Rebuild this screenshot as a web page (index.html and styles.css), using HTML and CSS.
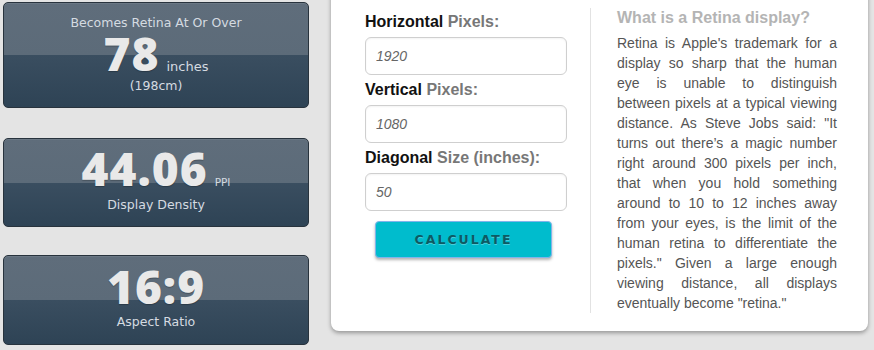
FILE: index.html
```html
<!DOCTYPE html>
<html lang="en">
<head>
    <meta charset="UTF-8">
    <meta name="viewport" content="width=device-width, initial-scale=1.0">
    <title>Retina Display Calculator</title>
    <link rel="stylesheet" href="styles.css">
</head>
<body>
    <div class="page">
        <div class="results">
            <div class="card card-big">
                <p class="card-label">Becomes Retina At Or Over</p>
                <p class="card-value">78<span class="unit">inches</span></p>
                <p class="card-label">(198cm)</p>
            </div>
            <div class="card">
                <p class="card-value">44.06<span class="unit unit-small">PPI</span></p>
                <p class="card-label">Display Density</p>
            </div>
            <div class="card card-last">
                <p class="card-value">16:9</p>
                <p class="card-label">Aspect Ratio</p>
            </div>
        </div>

        <div class="panel">
            <form class="calc" onsubmit="return false;">
                <label for="horizontal"><b>Horizontal</b> Pixels:</label>
                <input type="text" id="horizontal" placeholder="1920">
                <label for="vertical"><b>Vertical</b> Pixels:</label>
                <input type="text" id="vertical" placeholder="1080">
                <label for="diagonal"><b>Diagonal</b> Size (inches):</label>
                <input type="text" id="diagonal" placeholder="50">
                <button type="submit" class="btn-calc">CALCULATE</button>
            </form>

            <div class="info">
                <h3>What is a Retina display?</h3>
                <p>Retina is Apple's trademark for a display so sharp that the human eye is unable to distinguish between pixels at a typical viewing distance. As Steve Jobs said: "It turns out there’s a magic number right around 300 pixels per inch, that when you hold something around to 10 to 12 inches away from your eyes, is the limit of the human retina to differentiate the pixels." Given a large enough viewing distance, all displays eventually become "retina."</p>
            </div>
        </div>
    </div>
</body>
</html>
```

FILE: styles.css
```css
* {
    margin: 0;
    padding: 0;
    box-sizing: border-box;
}
body {
    background-color: #e4e4e4;
    font-family: 'Liberation Sans', Arial, sans-serif;
    overflow: hidden;
}
.page {
    display: flex;
    align-items: flex-start;
    gap: 22px;
    padding: 2px 0 0 3px;
}
.results {
    width: 306px;
    display: flex;
    flex-direction: column;
}
.card {
    height: 89px;
    margin-top: 30px;
    border: 1px solid #28333d;
    border-radius: 5px;
    background: linear-gradient(180deg, #5f6d7b 0%, #5c6b79 50%, #3a4e60 50%, #2e4355 100%);
    box-shadow: inset 0 1px 0 rgba(255, 255, 255, 0.08);
    display: flex;
    flex-direction: column;
    justify-content: center;
    align-items: center;
    gap: 7px;
    padding-bottom: 4px;
    color: #d5dbe1;
    font-family: 'DejaVu Sans', Verdana, sans-serif;
}
.card-big {
    height: 106px;
    margin-top: 0;
    gap: 0;
    padding-bottom: 2px;
}
.card-big .card-value {
    margin: 2px 0 4px;
}
.card-last {
    height: 90px;
    margin-top: 28px;
}
.card-label {
    font-size: 12.5px;
    line-height: 17px;
}
.card-value {
    font-family: 'Open Sans', sans-serif;
    font-weight: 800;
    font-size: 46px;
    line-height: 40px;
    color: #e9e9e9;
    letter-spacing: 1px;
    text-shadow: 0 1px 1px rgba(0, 0, 0, 0.25);
}
.unit {
    font-family: 'DejaVu Sans', Verdana, sans-serif;
    font-weight: normal;
    font-size: 13px;
    line-height: 13px;
    letter-spacing: 0;
    color: #d5dbe1;
    margin-left: 7px;
    text-shadow: none;
}
.unit-small {
    font-size: 10.5px;
    margin-left: 7px;
}
.panel {
    width: 537px;
    margin-top: -14px;
    background: #ffffff;
    border-radius: 8px;
    box-shadow: 0 2px 4px rgba(0, 0, 0, 0.35);
    display: flex;
    padding: 20px 31px 18px 34px;
}
.calc {
    width: 226px;
    padding: 4px 23px 0 0;
    border-right: 1px solid #e2e2e2;
    display: flex;
    flex-direction: column;
    align-items: flex-start;
}
.calc label {
    font-size: 16px;
    font-weight: bold;
    line-height: 20px;
    color: #777777;
    margin-bottom: 5px;
}
.calc label b {
    color: #111111;
}
.calc input {
    width: 202px;
    height: 38px;
    margin-bottom: 5px;
    border: 1px solid #cfcfcf;
    border-radius: 6px;
    padding: 0 10px;
    font-family: 'Liberation Sans', Arial, sans-serif;
    font-size: 14px;
    font-style: italic;
    box-shadow: inset 0 1px 2px rgba(0, 0, 0, 0.05);
}
.calc input::placeholder {
    color: #666666;
}
.btn-calc {
    width: 177px;
    height: 37px;
    margin: 5px 0 0 10px;
    background: #00bccd;
    border: 1px solid #7fb4ea;
    border-radius: 4px;
    box-shadow: 0 2px 3px rgba(0, 0, 0, 0.3);
    color: #0d5a63;
    font-family: 'DejaVu Sans', Verdana, sans-serif;
    font-weight: bold;
    font-size: 12.5px;
    letter-spacing: 2px;
    text-shadow: 0 1px 0 rgba(255, 255, 255, 0.3);
    cursor: pointer;
}
.info {
    flex: 1;
    padding-left: 26px;
}
.info h3 {
    font-size: 16px;
    line-height: 20px;
    color: #b4b4b4;
    margin-bottom: 5px;
}
.info p {
    font-size: 14px;
    line-height: 20px;
    color: #555555;
    text-align: justify;
}
```
